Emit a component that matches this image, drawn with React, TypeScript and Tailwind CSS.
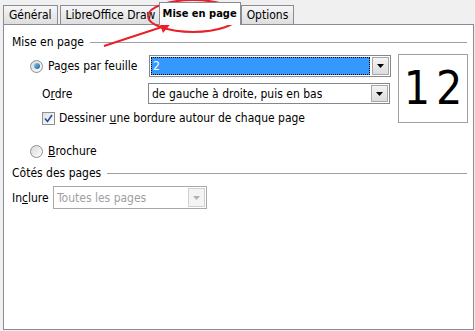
import React from 'react';

const font = { fontFamily: '"DejaVu Sans Condensed", "Liberation Sans", sans-serif' };

function Tab({ label, active, className }: { label: string; active?: boolean; className?: string }) {
  if (active) {
    return (
      <div className={`h-[23px] px-[3px] flex items-center bg-white border border-b-0 border-[#898c95] -mb-px relative z-10 font-bold text-[11px] whitespace-nowrap ${className ?? ''}`}>
        {label}
      </div>
    );
  }
  return (
    <div className={`h-[19px] px-[5px] flex items-center border border-b-0 border-[#898c95] bg-gradient-to-b from-[#f6f6f6] to-[#dedede] whitespace-nowrap overflow-hidden ${className ?? ''}`}>
      {label}
    </div>
  );
}

function DropButton() {
  return (
    <div className="w-[17px] h-full flex items-center justify-center bg-gradient-to-b from-[#f4f4f4] to-[#dcdcdc] border border-[#a7a7a7]">
      <svg width="7" height="4" viewBox="0 0 7 4">
        <path d="M0 0h7L3.5 4z" fill="#000" />
      </svg>
    </div>
  );
}

function Radio({ checked }: { checked?: boolean }) {
  return (
    <div className="w-[13px] h-[13px] rounded-full border border-[#8e8f8f] bg-gradient-to-br from-[#d8d8d8] to-[#ffffff] flex items-center justify-center shrink-0">
      {checked && <div className="w-[6px] h-[6px] rounded-full bg-gradient-to-br from-[#7fd0f5] to-[#1a5f9c]" />}
    </div>
  );
}

function GroupTitle({ label }: { label: string }) {
  return (
    <div className="flex items-center gap-[6px] pr-[6px] h-[14px]">
      <span>{label}</span>
      <div className="flex-1 h-px bg-[#a0a0a0]" />
    </div>
  );
}

export default function App() {
  return (
    <div className="w-[475px] h-[331px] bg-[#f0f0f0] relative overflow-hidden text-[12px] leading-[14px] text-black" style={font}>
      <div className="flex items-end h-[24px] pl-[3px]">
        <Tab label="Général" />
        <Tab label="LibreOffice Draw" className="ml-[2px] w-[100px]" />
        <Tab label="Mise en page" active className="-ml-px" />
        <Tab label="Options" className="px-[1px]" />
      </div>

      <div className="ml-[3px] w-[471px] h-[306px] bg-white border border-[#898c95] pl-[8px] pt-[10px]">
        <GroupTitle label="Mise en page" />

        <div className="flex mt-[6px]">
          <div className="w-[386px]">
            <div className="flex items-center h-[22px] pl-[18px]">
              <Radio checked />
              <span className="ml-[5px] w-[101px]">
                Pa<span className="underline">g</span>es par feuille
              </span>
              <div className="w-[242px] h-[22px] border border-[#828790] flex p-px gap-[2px]">
                <div className="flex-1 bg-[#3399ff] text-white border border-dotted border-black flex items-center pl-px">2</div>
                <DropButton />
              </div>
            </div>

            <div className="flex items-center h-[21px] mt-[6px] pl-[30px]">
              <span className="w-[106px]">
                O<span className="underline">r</span>dre
              </span>
              <div className="w-[242px] h-[21px] border border-[#828790] flex p-px gap-[2px]">
                <div className="flex-1 flex items-center pl-[2px]">de gauche à droite, puis en bas</div>
                <DropButton />
              </div>
            </div>

            <div className="flex items-center mt-[6px] pl-[30px] h-[16px]">
              <div className="w-[13px] h-[13px] border border-[#8e8f8f] bg-gradient-to-br from-[#e0e0e0] to-white flex items-center justify-center">
                <svg width="9" height="9" viewBox="0 0 9 9">
                  <path d="M1 4.5l2.5 3L8 1" stroke="#2a4d9a" strokeWidth="1.6" fill="none" />
                </svg>
              </div>
              <span className="ml-[4px]">
                Dessiner <span className="underline">u</span>ne bordure autour de chaque page
              </span>
            </div>
          </div>

          <div className="-mt-px w-[70px] h-[69px] border border-[#a0a0a0] flex items-center justify-center gap-[6px] text-[46px] leading-none pb-[2px]">
            <span>1</span>
            <span>2</span>
          </div>
        </div>

        <div className="flex items-center pl-[18px] mt-[17px] h-[16px]">
          <Radio />
          <span className="ml-[5px]">
            <span className="underline">B</span>rochure
          </span>
        </div>

        <div className="mt-[7px]">
          <GroupTitle label="Côtés des pages" />
        </div>

        <div className="flex items-center mt-[6px] h-[23px]">
          <span className="w-[41px]">
            In<span className="underline">c</span>lure
          </span>
          <div className="w-[154px] h-[23px] border border-[#a8a8a8] flex p-px gap-[2px]">
            <div className="flex-1 flex items-center pl-[2px] text-[#a0a0a0]">Toutes les pages</div>
            <div className="w-[17px] h-full flex items-center justify-center border border-[#d0d0d0] bg-[#f4f4f4]">
              <svg width="7" height="4" viewBox="0 0 7 4">
                <path d="M0 0h7L3.5 4z" fill="#b0b0b0" />
              </svg>
            </div>
          </div>
        </div>
      </div>

      <svg className="absolute left-0 top-0 pointer-events-none" width="475" height="331">
        <ellipse cx="193" cy="16" rx="45" ry="16" fill="none" stroke="#e8202a" strokeWidth="2" />
        <line x1="104" y1="46" x2="168" y2="25" stroke="#e8202a" strokeWidth="2" />
        <path d="M174 20L163 33L159 22z" fill="#e8202a" />
      </svg>
    </div>
  );
}
